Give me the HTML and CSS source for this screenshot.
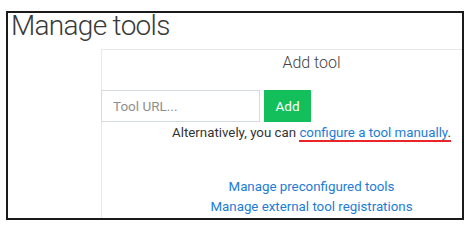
FILE: index.html
```html
<!DOCTYPE html>
<html>
<head>
<meta charset="utf-8">
<link rel="stylesheet" href="styles.css">
</head>
<body>
<div class="frame">
  <h1 class="page-title">Manage tools</h1>
  <div class="panel-clip">
    <div class="panel">
      <div class="panel-title">Add tool</div>
      <form class="add-form">
        <input class="url-input" type="text" placeholder="Tool URL...">
        <button class="add-btn" type="button">Add</button>
      </form>
      <p class="alt-text">Alternatively, you can <span class="mark"><a class="link" href="#">configure a tool manually</a>.</span></p>
      <div class="links">
        <a class="link" href="#">Manage preconfigured tools</a>
        <a class="link" href="#">Manage external tool registrations</a>
      </div>
    </div>
  </div>
</div>
</body>
</html>
```
FILE: styles.css
```css
html, body {
  margin: 0;
  padding: 0;
  background: #ffffff;
}
body {
  font-family: Roboto, "Liberation Sans", sans-serif;
  color: #333333;
}
.frame {
  margin: 11px 0 0 6px;
  width: 458px;
  height: 209px;
  box-sizing: border-box;
  border: 2px solid #1a1a1a;
  background: #ffffff;
  display: flex;
  flex-direction: column;
}
.page-title {
  margin: -2px 0 0 0;
  padding: 0 0 0 3px;
  font-size: 28px;
  font-weight: 300;
  letter-spacing: -0.7px;
  line-height: 30px;
  color: #3a3a3a;
  white-space: nowrap;
}
.panel-clip {
  margin-top: 8px;
  flex: 1;
  overflow: hidden;
}
.panel {
  margin-left: 93px;
  width: 420px;
  border-top: 1px solid #e8e8e8;
  border-left: 1px solid #e8e8e8;
  display: flex;
  flex-direction: column;
  align-items: center;
  min-height: 100%;
  box-sizing: border-box;
}
.panel-title {
  font-size: 16px;
  font-weight: 300;
  line-height: 26px;
  color: #444444;
}
.add-form {
  margin: 14px 0 0 -1px;
  align-self: flex-start;
  display: flex;
  gap: 4px;
  height: 32px;
}
.url-input {
  width: 159px;
  height: 32px;
  box-sizing: border-box;
  border: 1px solid #d6dbe0;
  padding: 0 11px;
  font-family: Roboto, "Liberation Sans", sans-serif;
  font-size: 13.5px;
  color: #333;
  outline: none;
}
.url-input::placeholder {
  color: #8f8f8f;
}
.add-btn {
  width: 47px;
  height: 32px;
  border: none;
  background: #13bf5a;
  color: #ffffff;
  font-family: Roboto, "Liberation Sans", sans-serif;
  font-size: 13.5px;
  padding: 0;
}
.alt-text {
  margin: 1px 0 0 0;
  font-size: 13.3px;
  line-height: 20px;
  white-space: nowrap;
}
.mark {
  border-bottom: 2px solid #e8262a;
}
.link {
  color: #1c7cd6;
  text-decoration: none;
}
.links {
  margin-top: 34px;
  display: flex;
  flex-direction: column;
  align-items: center;
  font-size: 13.3px;
  line-height: 20px;
  white-space: nowrap;
}
```
